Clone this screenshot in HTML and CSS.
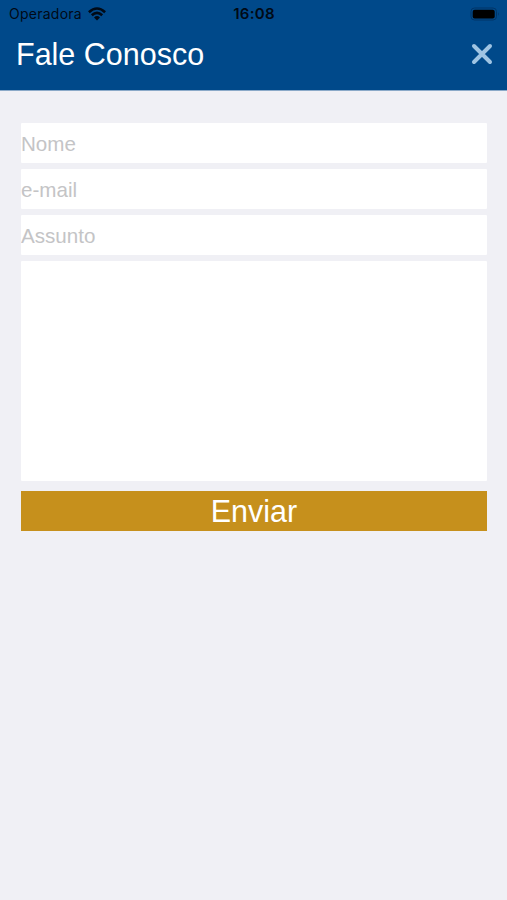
FILE: index.html
```html
<!DOCTYPE html>
<html lang="pt-BR">

<head>
    <meta charset="UTF-8">
    <meta name="viewport" content="width=device-width, initial-scale=1.0">
    <title>Fale Conosco</title>
    <link rel="stylesheet" href="styles.css">
</head>

<body>

<header class="top">
    <div class="status-bar">
        <div class="carrier">
            <span>Operadora</span>
            <svg class="wifi" viewBox="0 0 18 14" width="18" height="14">
                <g fill="none" stroke="#000a16" stroke-width="2.6">
                    <path d="M0.9 5.2 Q9 -2.2 17.1 5.2"/>
                    <path d="M3.8 8.2 Q9 3.4 14.2 8.2"/>
                </g>
                <path d="M6 10.4 Q9 7.8 12 10.4 L9 13.4 Z" fill="#000a16"/>
            </svg>
        </div>
        <span class="clock">16:08</span>
        <svg class="battery" viewBox="0 0 30 14" width="30" height="14">
            <rect x="1" y="1" width="25.5" height="12" rx="3.5" fill="none" stroke="#003567" stroke-width="1"/>
            <rect x="2.7" y="2.7" width="22" height="8.8" rx="2" fill="#000"/>
            <path d="M28 5 Q29.6 7 28 9 Z" fill="#003567"/>
        </svg>
    </div>
    <div class="title-bar">
        <h1>Fale Conosco</h1>
        <button class="close" type="button" aria-label="Fechar">
            <svg viewBox="0 0 22 22" width="22" height="22">
                <path d="M3 3 L19 19 M19 3 L3 19" stroke="#9fc4e3" stroke-width="4" stroke-linecap="round"/>
            </svg>
        </button>
    </div>
</header>

<form class="contact">
    <input class="field" type="text" placeholder="Nome">
    <input class="field" type="text" placeholder="e-mail">
    <input class="field" type="text" placeholder="Assunto">
    <textarea class="message"></textarea>
    <button class="send" type="button">Enviar</button>
</form>

</body>

</html>
```

FILE: styles.css
```css
body {
    margin: 0;
    min-height: 100vh;
    background-color: #f0f0f5;
    font-family: "Liberation Sans", Arial, sans-serif;
}

.top {
    height: 90px;
    background-color: #00498a;
    border-bottom: 1px solid #8ba9c8;
    box-sizing: content-box;
}

.status-bar {
    display: grid;
    grid-template-columns: 1fr auto 1fr;
    align-items: center;
    height: 27px;
    padding: 0 8px 0 9px;
    color: #000a16;
    font-family: Inter, sans-serif;
    font-size: 14px;
    letter-spacing: 0.25px;
}

.carrier {
    display: flex;
    align-items: center;
    gap: 6px;
}

.clock {
    font-weight: 600;
    font-size: 15px;
}

.battery {
    justify-self: end;
    margin-right: -1px;
}

.title-bar {
    display: flex;
    justify-content: space-between;
    align-items: center;
    height: 54px;
    padding: 0 14px 0 16px;
}

.title-bar h1 {
    margin: 0;
    padding-top: 1px;
    color: white;
    font-size: 30.5px;
    font-weight: normal;
}

.close {
    display: flex;
    padding: 0;
    border: none;
    background: none;
}

.contact {
    display: flex;
    flex-direction: column;
    gap: 6px;
    padding: 32px 20px 0 21px;
}

.field {
    height: 40px;
    padding: 1px 0 0;
    border: none;
    box-sizing: border-box;
    border-radius: 1px;
    background-color: white;
    font-family: inherit;
    font-size: 20.6px;
}

.field::placeholder {
    color: #c4c4c6;
}

.message {
    height: 220px;
    margin: 0;
    padding: 0;
    border: none;
    border-radius: 1px;
    resize: none;
    background-color: white;
    font-family: inherit;
    font-size: 20.6px;
}

.send {
    height: 40px;
    margin-top: 4px;
    padding: 0;
    border: none;
    background-color: #c6901c;
    color: white;
    font-family: inherit;
    font-size: 30.5px;
    line-height: 40px;
}
```
